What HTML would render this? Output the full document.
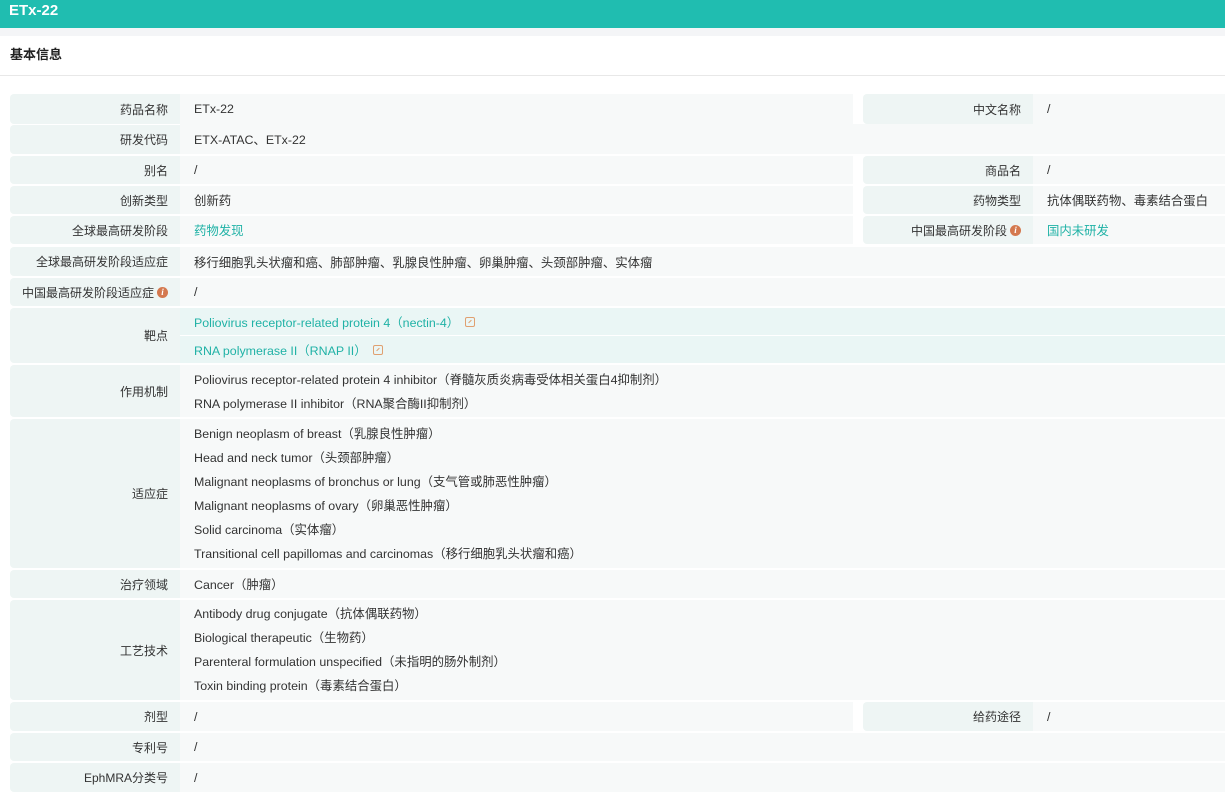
<!DOCTYPE html><html><head><meta charset="utf-8"><style>
*{margin:0;padding:0;box-sizing:border-box}
body{width:1225px;height:808px;background:#fff;font-family:"Liberation Sans","Noto Sans CJK SC",sans-serif;font-size:12.4px;color:#333;position:relative;overflow:hidden}
.hd{position:absolute;left:0;top:0;width:1225px;height:28px;background:#20bdb0;color:#fff;font-weight:bold;font-size:15px;line-height:22px;padding-left:9px}
.gs{position:absolute;left:0;top:28px;width:1225px;height:8px;background:#f4f5f7}
.t{position:absolute;left:10px;top:46px;font-weight:bold;font-size:13px;line-height:18px;color:#222}
.ln{position:absolute;left:0;top:75px;width:1225px;height:1px;background:#e8e8e8}
.l{position:absolute;background:#eef5f4;border-radius:4px 0 0 4px;text-align:right;padding-right:12px;display:flex;align-items:center;justify-content:flex-end;font-size:12px}
.v{position:absolute;background:#f7f9f9;padding-left:14px;display:flex;align-items:center}
.m{display:block;padding-top:3px;line-height:24px}
.g{color:#20b2a6}
.i{display:inline-block;width:11px;height:11px;border-radius:50%;background:#d4784e;color:#fff;font-size:9px;font-style:italic;font-weight:bold;text-align:center;line-height:11px;margin-left:3px;font-family:"Liberation Serif",serif}
.k{display:inline-block;width:10px;height:10px;border:1px solid #e0a070;margin-left:6px;border-radius:2px;vertical-align:-1px;position:relative}
.k:after{content:"";position:absolute;left:2px;top:3px;width:4px;height:1px;background:#e0a070;transform:rotate(-45deg)}
</style></head><body>
<div class="hd">ETx-22</div><div class="gs"></div>
<div class="t">基本信息</div><div class="ln"></div>

<div class="l" style="left:10px;top:94px;width:170px;height:30px">药品名称</div>
<div class="v" style="left:180px;top:94px;width:673px;height:30px">ETx-22</div>
<div class="l" style="left:863px;top:94px;width:170px;height:30px">中文名称</div>
<div class="v" style="left:1033px;top:94px;width:192px;height:30px">/</div>

<div class="l" style="left:10px;top:125px;width:170px;height:29px">研发代码</div>
<div class="v" style="left:180px;top:124px;width:1045px;height:30px">ETX-ATAC、ETx-22</div>

<div class="l" style="left:10px;top:156px;width:170px;height:28px">别名</div>
<div class="v" style="left:180px;top:156px;width:673px;height:28px">/</div>
<div class="l" style="left:863px;top:156px;width:170px;height:28px">商品名</div>
<div class="v" style="left:1033px;top:156px;width:192px;height:28px">/</div>

<div class="l" style="left:10px;top:186px;width:170px;height:28px">创新类型</div>
<div class="v" style="left:180px;top:186px;width:673px;height:28px">创新药</div>
<div class="l" style="left:863px;top:186px;width:170px;height:28px">药物类型</div>
<div class="v" style="left:1033px;top:186px;width:192px;height:28px">抗体偶联药物、毒素结合蛋白</div>

<div class="l" style="left:10px;top:216px;width:170px;height:28px">全球最高研发阶段</div>
<div class="v g" style="left:180px;top:216px;width:673px;height:28px">药物发现</div>
<div class="l" style="left:863px;top:216px;width:170px;height:28px">中国最高研发阶段<span class="i">i</span></div>
<div class="v g" style="left:1033px;top:216px;width:192px;height:28px">国内未研发</div>

<div class="l" style="left:10px;top:247px;width:170px;height:29px">全球最高研发阶段适应症</div>
<div class="v" style="left:180px;top:247px;width:1045px;height:29px">移行细胞乳头状瘤和癌、肺部肿瘤、乳腺良性肿瘤、卵巢肿瘤、头颈部肿瘤、实体瘤</div>

<div class="l" style="left:10px;top:278px;width:170px;height:28px">中国最高研发阶段适应症<span class="i">i</span></div>
<div class="v" style="left:180px;top:278px;width:1045px;height:28px">/</div>

<div class="l" style="left:10px;top:308px;width:170px;height:55px">靶点</div>
<div class="v g" style="left:180px;top:308px;width:1045px;height:27px;background:#eaf6f5">Poliovirus receptor-related protein 4（nectin-4）<span class="k"></span></div>
<div class="v g" style="left:180px;top:336px;width:1045px;height:27px;background:#eaf6f5">RNA polymerase II（RNAP II）<span class="k"></span></div>

<div class="l" style="left:10px;top:365px;width:170px;height:52px">作用机制</div>
<div class="v" style="left:180px;top:365px;width:1045px;height:52px;align-items:flex-start"><span class="m">Poliovirus receptor-related protein 4 inhibitor（脊髓灰质炎病毒受体相关蛋白4抑制剂）<br>RNA polymerase II inhibitor（RNA聚合酶II抑制剂）</span></div>

<div class="l" style="left:10px;top:419px;width:170px;height:149px">适应症</div>
<div class="v" style="left:180px;top:419px;width:1045px;height:149px;align-items:flex-start"><span class="m">Benign neoplasm of breast（乳腺良性肿瘤）<br>Head and neck tumor（头颈部肿瘤）<br>Malignant neoplasms of bronchus or lung（支气管或肺恶性肿瘤）<br>Malignant neoplasms of ovary（卵巢恶性肿瘤）<br>Solid carcinoma（实体瘤）<br>Transitional cell papillomas and carcinomas（移行细胞乳头状瘤和癌）</span></div>

<div class="l" style="left:10px;top:570px;width:170px;height:28px">治疗领域</div>
<div class="v" style="left:180px;top:570px;width:1045px;height:28px">Cancer（肿瘤）</div>

<div class="l" style="left:10px;top:600px;width:170px;height:100px">工艺技术</div>
<div class="v" style="left:180px;top:600px;width:1045px;height:100px;align-items:flex-start"><span class="m" style="padding-top:2px">Antibody drug conjugate（抗体偶联药物）<br>Biological therapeutic（生物药）<br>Parenteral formulation unspecified（未指明的肠外制剂）<br>Toxin binding protein（毒素结合蛋白）</span></div>

<div class="l" style="left:10px;top:702px;width:170px;height:29px">剂型</div>
<div class="v" style="left:180px;top:702px;width:673px;height:29px">/</div>
<div class="l" style="left:863px;top:702px;width:170px;height:29px">给药途径</div>
<div class="v" style="left:1033px;top:702px;width:192px;height:29px">/</div>

<div class="l" style="left:10px;top:733px;width:170px;height:28px">专利号</div>
<div class="v" style="left:180px;top:733px;width:1045px;height:28px">/</div>

<div class="l" style="left:10px;top:763px;width:170px;height:29px">EphMRA分类号</div>
<div class="v" style="left:180px;top:763px;width:1045px;height:29px">/</div>
</body></html>
